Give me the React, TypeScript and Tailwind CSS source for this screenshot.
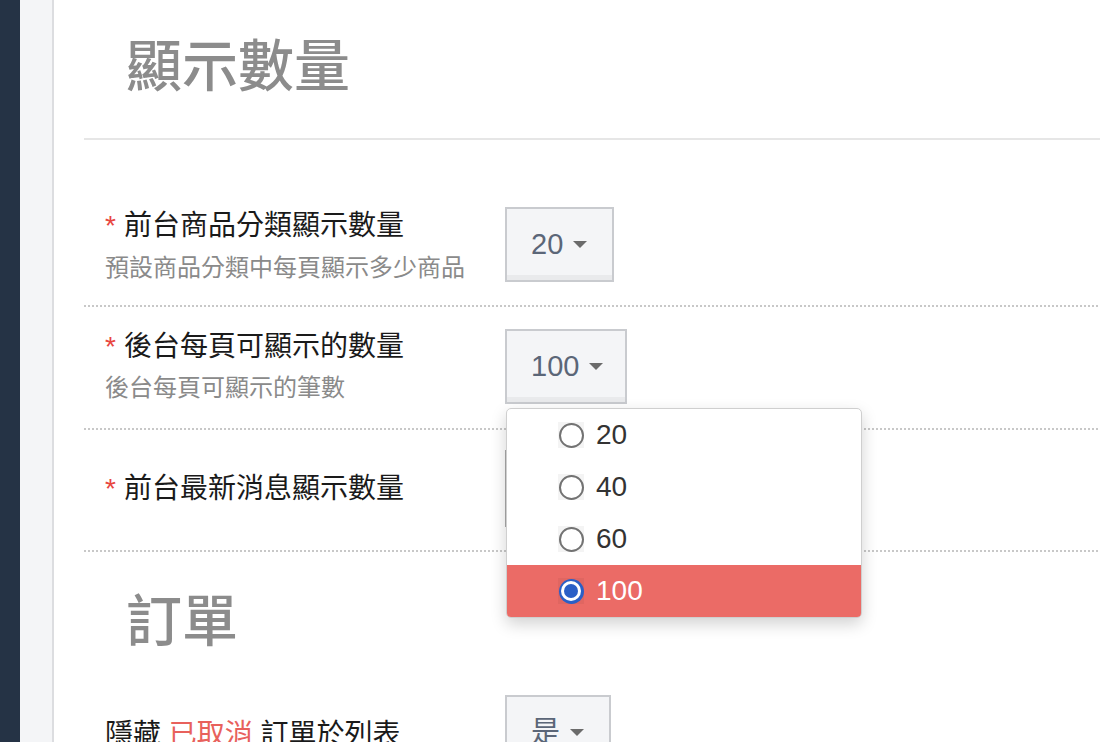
import React from 'react';

const font = '"Liberation Sans", "Noto Sans CJK TC", sans-serif';

function Caret() {
  return (
    <svg width="14" height="7" viewBox="0 0 14 7" className="shrink-0">
      <path d="M0 0 L14 0 L7 7 Z" fill="#6b6b6b" />
    </svg>
  );
}

function SelectBox({ value, h = 'h-[75px]', border = 'border-[#c9cbcf]', pr = 'pr-[25px]' }: { value: string; h?: string; border?: string; pr?: string }) {
  return (
    <div
      className={`inline-flex items-center ${h} border-2 ${border} bg-[#f4f5f7] pl-[24px] ${pr} gap-[10px] text-[29px] text-[#5b6678] shadow-[inset_0_-5px_0_#e9eaec]`}
    >
      <span className="leading-none">{value}</span>
      <Caret />
    </div>
  );
}

function Divider() {
  return <div className="h-[2px] bg-[repeating-linear-gradient(90deg,#c8c8c8_0_2px,transparent_2px_4px)]" />;
}

function Required() {
  return <span className="text-[#e8463f] mr-[8px]">*</span>;
}

function Radio({ checked }: { checked?: boolean }) {
  if (checked) {
    return (
      <span className="w-[26px] h-[26px] flex items-center justify-center bg-[#e06661] shrink-0">
        <span className="w-[25px] h-[25px] rounded-full bg-[#2b5fc6] flex items-center justify-center">
          <span className="w-[20px] h-[20px] rounded-full bg-white flex items-center justify-center">
            <span className="w-[14px] h-[14px] rounded-full bg-[#2b5fc6]" />
          </span>
        </span>
      </span>
    );
  }
  return (
    <span className="w-[26px] h-[26px] flex items-center justify-center bg-[#f4f4f4] shrink-0">
      <span className="w-[25px] h-[25px] rounded-full border-2 border-[#737373] bg-white" />
    </span>
  );
}

const options = ['20', '40', '60', '100'];

export default function App() {
  return (
    <div className="relative w-[1100px] h-[742px] overflow-hidden flex bg-white" style={{ fontFamily: font }}>
      <div className="w-[20px] bg-[#253345] shrink-0" />
      <div className="w-[34px] bg-[#f4f5f7] border-r-2 border-[#dcdde0] shrink-0" />

      <div className="flex-1 pl-[30px]">
        <div className="h-[138px] pt-[33px] pl-[42px]">
          <h1 className="text-[56px] leading-[67px] font-medium text-[#8c8c8c]">顯示數量</h1>
        </div>
        <div className="h-[2px] bg-[#e6e6e6]" />

        {/* row 1 */}
        <div className="flex h-[165px]">
          <div className="w-[421px] pl-[21px] pt-[68px]">
            <div className="text-[28px] leading-[36px] text-[#1a1a1a]">
              <Required />前台商品分類顯示數量
            </div>
            <div className="mt-[6px] text-[24px] leading-[36px] text-[#8a8a8a]">預設商品分類中每頁顯示多少商品</div>
          </div>
          <div className="pt-[67px]">
            <SelectBox value="20" />
          </div>
        </div>
        <Divider />

        {/* row 2 */}
        <div className="flex h-[121px]">
          <div className="w-[421px] pl-[21px] pt-[22px]">
            <div className="text-[28px] leading-[36px] text-[#1a1a1a]">
              <Required />後台每頁可顯示的數量
            </div>
            <div className="mt-[5px] text-[24px] leading-[36px] text-[#8a8a8a]">後台每頁可顯示的筆數</div>
          </div>
          <div className="pt-[22px]">
            <SelectBox value="100" pr="pr-[22px]" />
          </div>
        </div>
        <Divider />

        {/* row 3 */}
        <div className="flex h-[120px]">
          <div className="w-[421px] pl-[21px] pt-[41px]">
            <div className="text-[28px] leading-[36px] text-[#1a1a1a]">
              <Required />前台最新消息顯示數量
            </div>
          </div>
          <div className="pt-[20px]">
            <SelectBox value="10" h="h-[77px]" border="border-[#a9a9a9]" />
          </div>
        </div>
        <Divider />

        <div className="pt-[36px] pl-[42px]">
          <h2 className="text-[56px] leading-[67px] font-medium text-[#8c8c8c]">訂單</h2>
        </div>

        {/* row 4 */}
        <div className="flex">
          <div className="w-[421px] pl-[21px] pt-[62px]">
            <div className="text-[28px] leading-[36px] text-[#1a1a1a]">
              隱藏 <span className="text-[#e8615c]">已取消</span> 訂單於列表
            </div>
          </div>
          <div className="pt-[40px]">
            <SelectBox value="是" />
          </div>
        </div>
      </div>

      {/* open dropdown */}
      <div className="absolute left-[506px] top-[408px] w-[356px] bg-white border border-[#cfcfcf] rounded-[5px] overflow-hidden shadow-[0_6px_16px_rgba(0,0,0,0.18)]">
        {options.map((o) => {
          const sel = o === '100';
          return (
            <div
              key={o}
              className={`h-[52px] flex items-center pl-[51px] gap-[12px] text-[28px] ${sel ? 'bg-[#eb6b66] text-white' : 'text-[#333333]'}`}
            >
              <Radio checked={sel} />
              <span className="leading-none">{o}</span>
            </div>
          );
        })}
      </div>
    </div>
  );
}
